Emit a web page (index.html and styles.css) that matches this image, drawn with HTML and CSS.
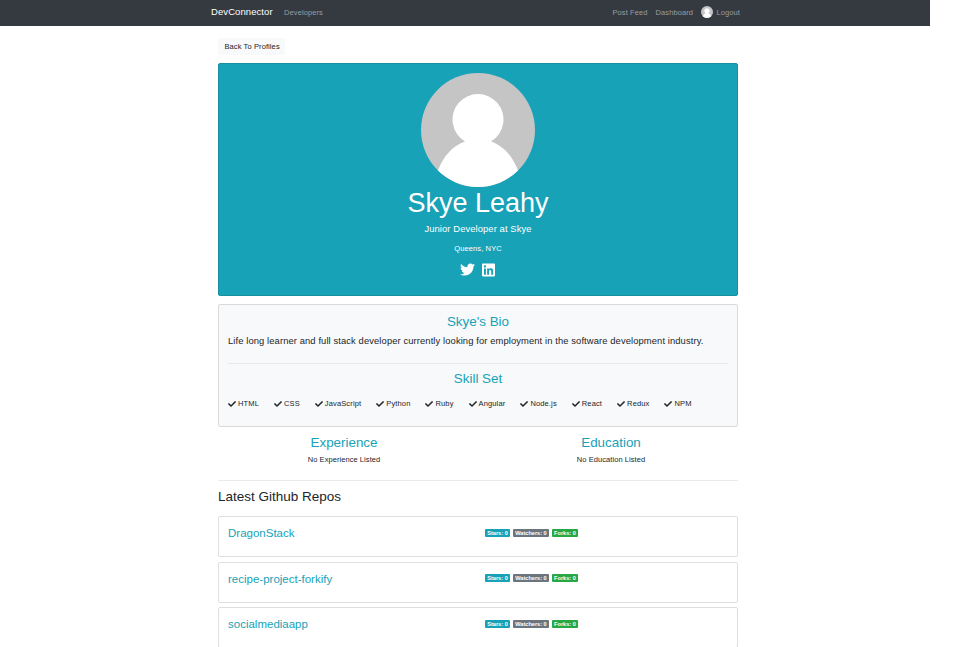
FILE: index.html
```html
<!DOCTYPE html>
<html lang="en">
<head>
<meta charset="utf-8">
<title>DevConnector</title>
<link rel="stylesheet" href="styles.css">
</head>
<body>
<svg class="defs" aria-hidden="true">
  <symbol id="avatar" viewBox="0 0 114 114">
    <circle cx="57" cy="57" r="57" fill="#c5c5c5"/>
    <path fill="#fff" d="M44 68.500A25.500 25.500 0 1 1 70 68.500C83 73 92 84 97 97.500A57 57 0 0 1 17 97.500C22 84 31 73 44 68.500Z"/>
  </symbol>
  <symbol id="check" viewBox="0 0 512 512">
    <path d="M173.900 439.400L7.500 273c-10-10-10-26.200 0-36.200l36.200-36.200c10-10 26.200-10 36.200 0L192 312.700 432.100 72.600c10-10 26.200-10 36.200 0l36.200 36.200c10 10 10 26.200 0 36.200L210.100 439.400c-10 10-26.200 10-36.200 0z"/>
  </symbol>
</svg>
<nav class="navbar">
  <div class="navbar-inner">
    <a class="brand">DevConnector</a>
    <a class="nav-link developers">Developers</a>
    <div class="nav-right">
      <a class="nav-link feed">Post Feed</a>
      <a class="nav-link dashboard">Dashboard</a>
      <a class="nav-link logout"><svg class="nav-avatar"><use href="#avatar"/></svg><span>Logout</span></a>
    </div>
  </div>
</nav>
<main class="container">
  <a class="back">Back To Profiles</a>
  <section class="hero">
    <svg class="hero-avatar"><use href="#avatar"/></svg>
    <h1>Skye Leahy</h1>
    <p class="lead">Junior Developer <span>at Skye</span></p>
    <p class="location">Queens, NYC</p>
    <div class="social">
      <svg class="twitter" viewBox="0 0 512 512"><path d="M459.370 151.716c.325 4.548.325 9.097.325 13.645 0 138.720-105.583 298.558-298.558 298.558-59.452 0-114.680-17.219-161.137-47.106 8.447.974 16.568 1.299 25.340 1.299 49.055 0 94.213-16.568 130.274-44.832-46.132-.975-84.792-31.188-98.112-72.772 6.498.974 12.995 1.624 19.818 1.624 9.421 0 18.843-1.300 27.614-3.573-48.081-9.747-84.143-51.980-84.143-102.985v-1.299c13.969 7.797 30.214 12.670 47.431 13.319-28.264-18.843-46.781-51.005-46.781-87.391 0-19.492 5.197-37.360 14.294-52.954 51.655 63.675 129.300 105.258 216.365 109.807-1.624-7.797-2.599-15.918-2.599-24.040 0-57.828 46.782-104.934 104.934-104.934 30.213 0 57.502 12.670 76.670 33.137 23.715-4.548 46.456-13.320 66.599-25.340-7.798 24.366-24.366 44.833-46.132 57.827 21.117-2.273 41.584-8.122 60.426-16.243-14.292 20.791-32.161 39.308-52.628 54.253z"/></svg>
      <svg class="linkedin" viewBox="0 0 448 448"><path d="M416 0H31.900C14.300 0 0 14.500 0 32.300v383.400C0 433.500 14.300 448 31.900 448H416c17.600 0 32-14.500 32-32.300V32.300C448 14.500 433.600 0 416 0zM135.400 384H69V170.200h66.500V384zm-33.200-243c-21.300 0-38.500-17.300-38.500-38.500S80.900 64 102.200 64c21.200 0 38.500 17.300 38.500 38.500 0 21.300-17.200 38.500-38.500 38.500zm282.100 243h-66.400V280c0-24.800-.5-56.700-34.500-56.700-34.600 0-39.900 27-39.900 54.900V384h-66.400V170.200h63.700v29.200h.9c8.900-16.800 30.600-34.500 62.900-34.500 67.200 0 79.700 44.300 79.700 101.900V384z"/></svg>
    </div>
  </section>
  <section class="about">
    <h3>Skye's Bio</h3>
    <p class="bio">Life long learner and full stack developer currently looking for employment in the software development industry.</p>
    <hr>
    <h3>Skill Set</h3>
    <ul class="skills">
      <li><svg><use href="#check"/></svg>HTML</li>
      <li><svg><use href="#check"/></svg>CSS</li>
      <li><svg><use href="#check"/></svg>JavaScript</li>
      <li><svg><use href="#check"/></svg>Python</li>
      <li><svg><use href="#check"/></svg>Ruby</li>
      <li><svg><use href="#check"/></svg>Angular</li>
      <li><svg><use href="#check"/></svg>Node.js</li>
      <li><svg><use href="#check"/></svg>React</li>
      <li><svg><use href="#check"/></svg>Redux</li>
      <li><svg><use href="#check"/></svg>NPM</li>
    </ul>
  </section>
  <section class="history">
    <div><h3>Experience</h3><p>No Experience Listed</p></div>
    <div><h3>Education</h3><p>No Education Listed</p></div>
  </section>
  <section class="repos">
    <h2>Latest Github Repos</h2>
    <article class="repo"><h4>DragonStack</h4><div class="badges"><span class="stars">Stars: 0</span><span class="watchers">Watchers: 0</span><span class="forks">Forks: 0</span></div></article>
    <article class="repo"><h4>recipe-project-forkify</h4><div class="badges"><span class="stars">Stars: 0</span><span class="watchers">Watchers: 0</span><span class="forks">Forks: 0</span></div></article>
    <article class="repo"><h4>socialmediaapp</h4><div class="badges"><span class="stars">Stars: 0</span><span class="watchers">Watchers: 0</span><span class="forks">Forks: 0</span></div></article>
  </section>
</main>
</body>
</html>
```
FILE: styles.css
```css
* { box-sizing: border-box; }
html { overflow: hidden; background: #fff; }
body {
  margin: 0;
  width: 930px;
  height: 647px;
  overflow: hidden;
  color: #212529;
  font: 7.5px/11px "Liberation Sans", Arial, sans-serif;
}
h1, h2, h3, h4, p, ul { margin: 0; padding: 0; font-weight: 400; }
.defs { position: absolute; width: 0; height: 0; }

.navbar { height: 26px; background: #343a40; }
.navbar-inner {
  display: flex;
  align-items: center;
  width: 530px;
  height: 24px;
  margin-left: 211px;
  white-space: nowrap;
}
.brand { width: 73px; padding-bottom: 1px; color: #fff; font-size: 9.5px; letter-spacing: .08px; }
.nav-link { color: #9a9da0; letter-spacing: .1px; }
.nav-right { display: flex; align-items: center; margin-left: auto; }
.feed { width: 43px; }
.dashboard { width: 45px; }
.logout { display: flex; align-items: center; gap: 4px; width: 40.500px; }
.nav-avatar { width: 12px; height: 12px; flex: none; }

.container { width: 520px; margin-left: 218px; padding-top: 12px; }
.back {
  display: block;
  width: 67px;
  height: 17px;
  margin-bottom: 8px;
  padding-left: 6.500px;
  border-radius: 2px;
  background: #f8f9fa;
  letter-spacing: .1px;
  line-height: 17px;
  white-space: nowrap;
}

.hero {
  display: flex;
  flex-direction: column;
  align-items: center;
  height: 233px;
  margin-bottom: 8px;
  padding-top: 9px;
  border: 1px solid #1790a3;
  border-radius: 2px;
  background: #17a2b8;
  color: #fff;
}
.hero-avatar { width: 114px; height: 114px; flex: none; }
h1 { height: 34px; font-size: 27px; line-height: 33px; }
.lead { height: 16px; font-size: 9.4px; letter-spacing: .1px; line-height: 16px; }
.location { height: 12px; margin-top: 6px; letter-spacing: .12px; line-height: 12px; }
.social { display: flex; align-items: center; gap: 7px; margin: 7px 2px 0 0; }
.social svg { fill: #fff; }
.twitter { width: 15px; height: 15px; }
.linkedin { width: 13px; height: 14px; }

.about {
  height: 123px;
  padding: 9px 9px 0;
  border: 1px solid #d9dadb;
  border-radius: 2px;
  background: #f8f9fa;
}
h3 {
  height: 16px;
  color: #17a2b8;
  font-size: 13.4px;
  line-height: 16px;
  text-align: center;
}
.bio { height: 14px; margin-top: 4px; font-size: 9.4px; letter-spacing: .105px; line-height: 14px; white-space: nowrap; }
hr { height: 1px; margin: 15px 0 7px; border: 0; background: #e5e6e7; }
.skills { display: flex; gap: 15px; margin-top: 11px; letter-spacing: .14px; list-style: none; white-space: nowrap; }
.skills li { display: flex; align-items: center; gap: 2px; }
.skills svg { width: 8px; height: 8px; flex: none; fill: #212529; }

.history {
  display: grid;
  grid-template-columns: 252px 252px;
  gap: 15px;
  height: 54px;
  padding-top: 8px;
  border-bottom: 1px solid #ebebeb;
  text-align: center;
}
.history p { margin-top: 3px; letter-spacing: .06px; }

h2 { height: 35px; padding-top: 8px; font-size: 13.5px; line-height: 16px; }
.repo {
  display: grid;
  grid-template-columns: 257px 1fr;
  height: 41px;
  margin-bottom: 4.500px;
  padding: 9px 9px 0;
  border: 1px solid #dfdfdf;
  border-radius: 2px;
}
h4 { height: 14px; color: #17a2b8; font-size: 11.5px; line-height: 15px; }
.badges { display: flex; gap: 3px; padding-top: 2.500px; }
.badges span {
  height: 8px;
  border-radius: 1px;
  color: #fff;
  font-size: 5.6px;
  font-weight: 700;
  line-height: 8px;
  text-align: center;
  white-space: nowrap;
}
.stars { width: 25px; background: #17a2b8; }
.watchers { width: 36px; background: #6c757d; }
.forks { width: 26px; background: #28a745; }
```
